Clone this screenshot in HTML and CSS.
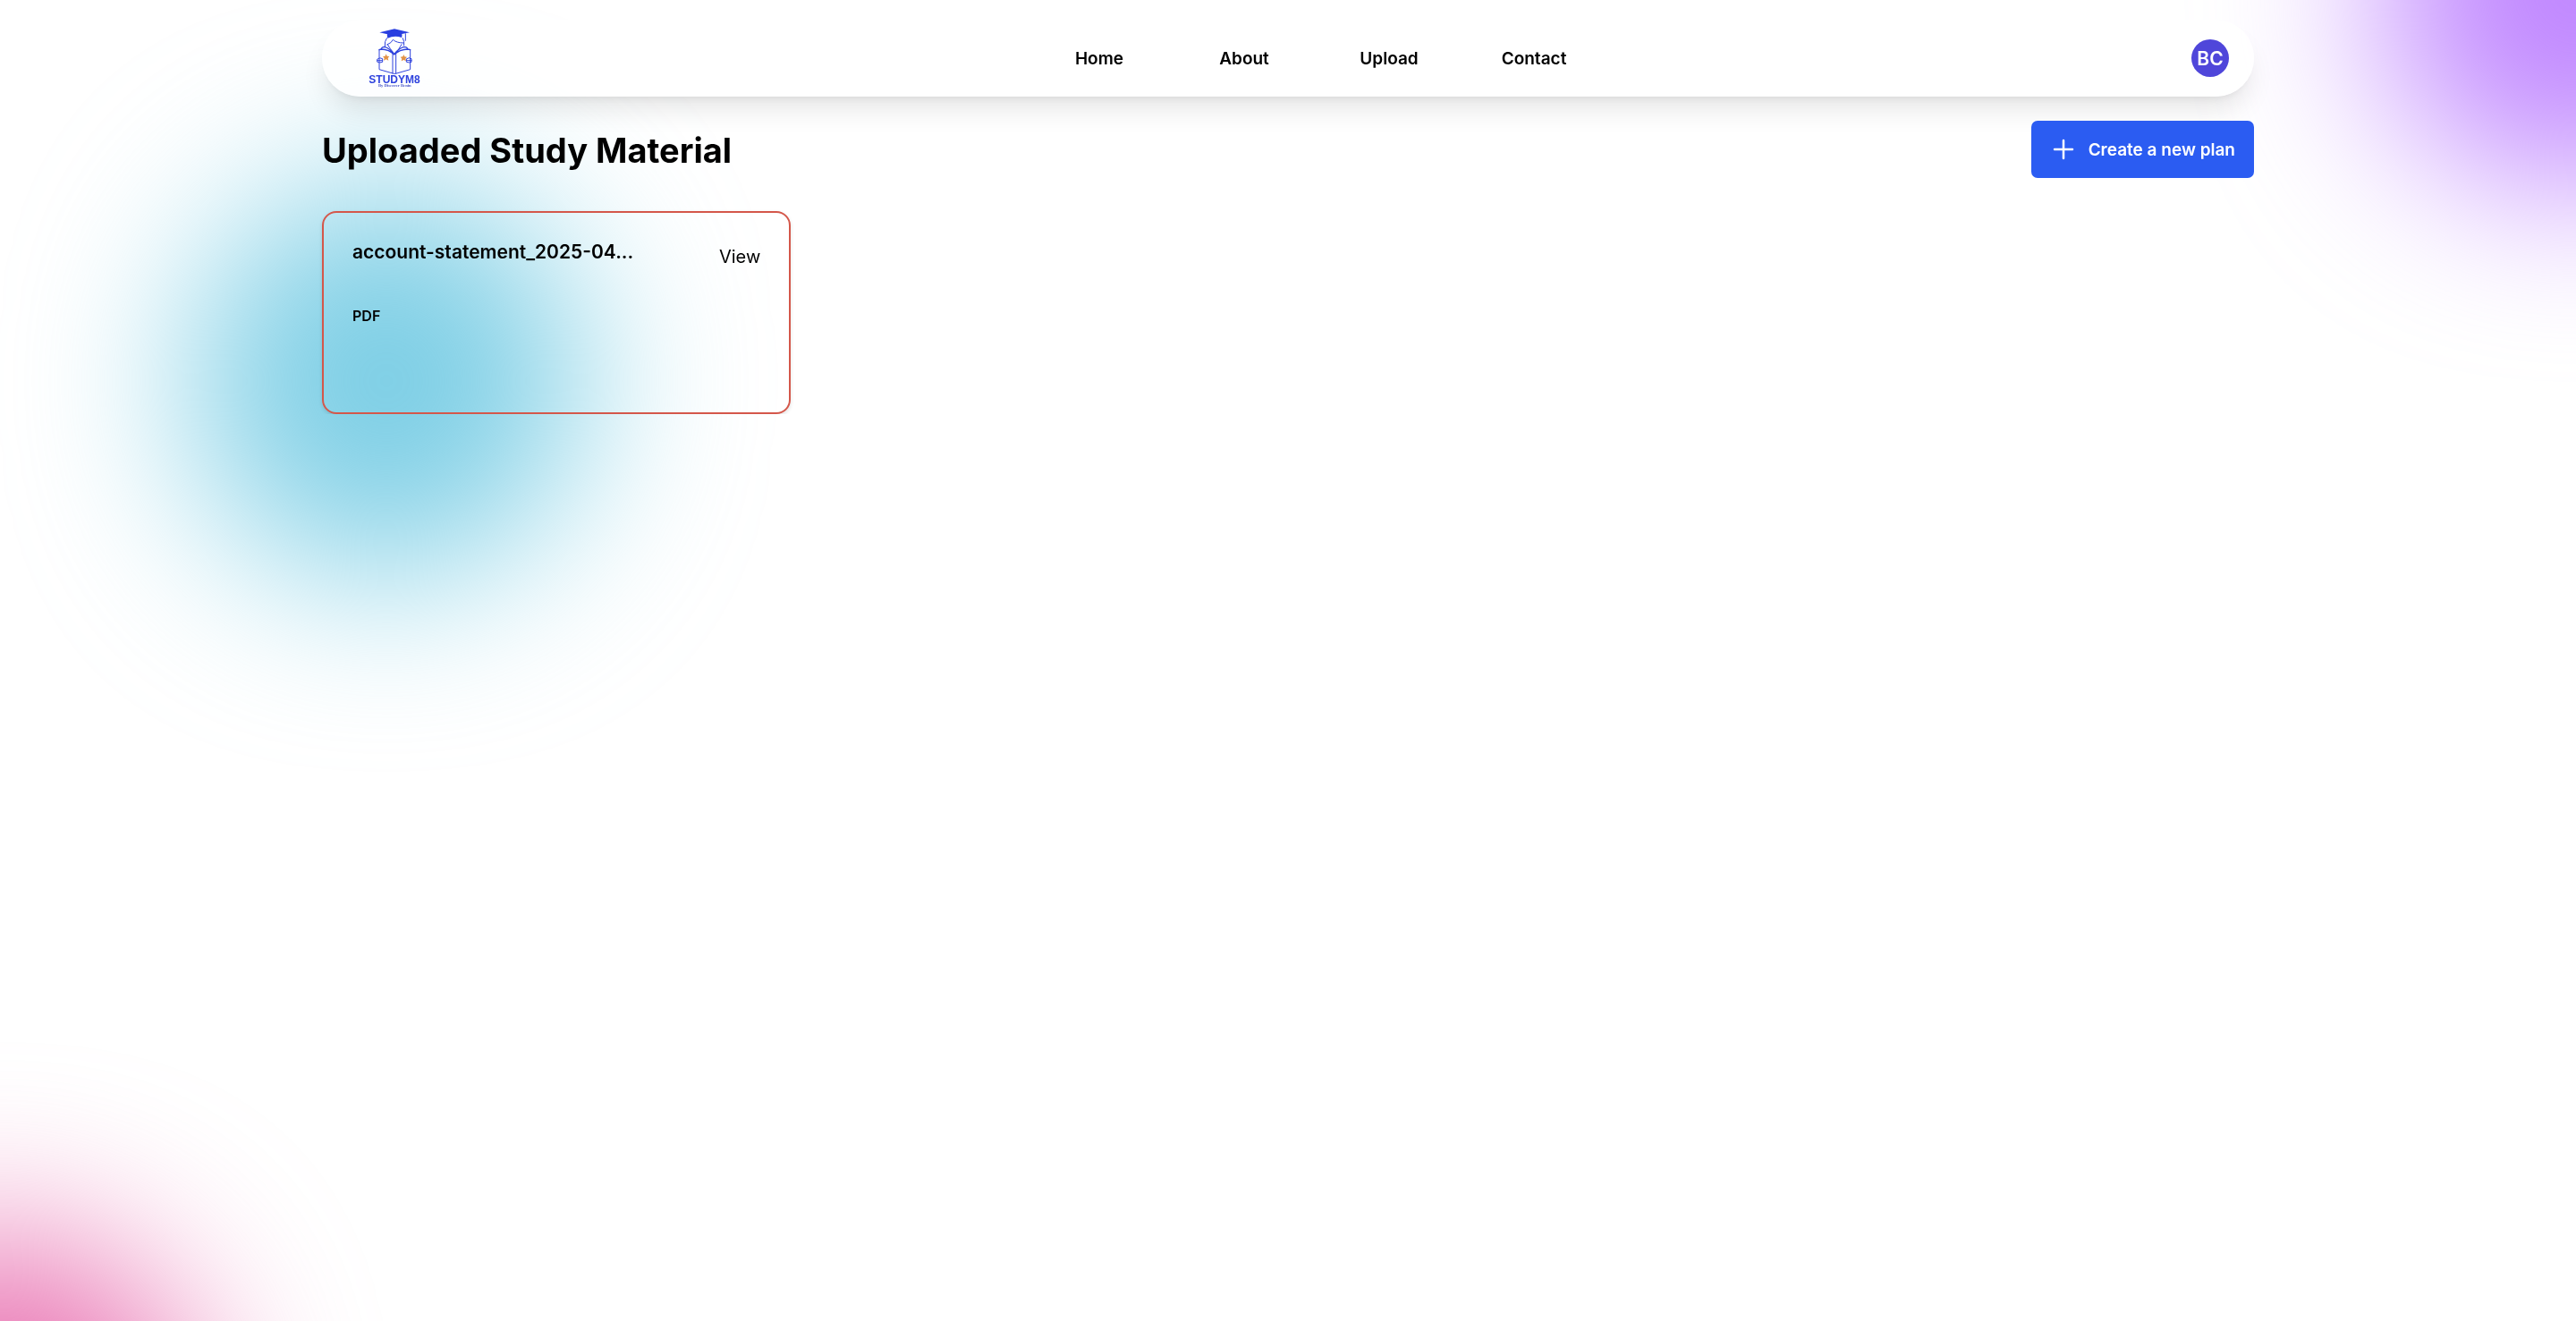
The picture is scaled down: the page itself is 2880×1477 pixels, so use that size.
FILE: index.html
```html
<!DOCTYPE html>
<html lang="en">
<head>
<meta charset="utf-8">
<meta name="viewport" content="width=device-width, initial-scale=1">
<title>StudyM8 – Uploaded Study Material</title>
<link rel="stylesheet" href="styles.css">
</head>
<body>
<div class="backdrop" aria-hidden="true">
  <div class="blob blob-cyan"></div>
  <div class="blob blob-purple"></div>
  <div class="blob blob-pink"></div>
</div>
<div class="page">
  <header class="navbar">
    <a href="#" class="logo" aria-label="StudyM8">
      <svg class="logo-art" viewBox="-36 6 318 258" fill="none" stroke="#2f43dd" stroke-width="4" stroke-linejoin="round" stroke-linecap="round">
        <path d="M73 49 L123 37 L174 49 L148 54 Q150 62 147 66 Q124 57 100 68 Q97 62 99 55 Z" fill="#2a3fe0" stroke="none"/>
        <path d="M160 53 V76" stroke-width="3"/>
        <path d="M97 68 Q89 78 91 96 M151 68 Q157 78 155 92 M98 90 Q114 84 118 73 Q130 84 153 84 M101 91 Q108 103 121 119 M147 89 Q138 108 124 119" stroke-width="3"/>
        <path d="M72 107 L78 105 Q81 97 90 97 Q111 104 122 123 Q134 104 155 97 Q165 97 168 105 L176 107 M78 105 Q106 106 122 123 Q140 106 168 105"/>
        <path d="M72 107 V173 L121 187 L127 187 L176 173 V107 M117 121 V186 M128 121 V186" stroke-width="3"/>
        <path d="M66 138 Q75 131 83 137 V148 Q74 152 66 148 Z M66 143 H82 M164 137 Q172 131 180 137 V148 Q173 152 164 148 Z M164 143 H180" stroke-width="3"/>
        <path id="star" d="M95 121 L98 128 L106 129 L101 135 L103 143 L95 139 L87 143 L89 135 L84 129 L92 128 Z" fill="#e29245" stroke="none"/>
        <use href="#star" x="59" y="2"/>
        <text class="logo-name" x="123" y="220" text-anchor="middle">STUDYM8</text>
        <text class="logo-tag" x="124" y="232" text-anchor="middle">By Discover Benin</text>
      </svg>
    </a>
    <nav class="menu">
      <a href="#">Home</a>
      <a href="#">About</a>
      <a href="#">Upload</a>
      <a href="#">Contact</a>
    </nav>
    <button type="button" class="avatar">BC</button>
  </header>
  <main>
    <div class="heading">
      <h1>Uploaded Study Material</h1>
      <button type="button" class="create">
        <svg class="plus" viewBox="0 0 24 24" fill="none" stroke="currentColor" stroke-width="2.500" stroke-linecap="round"><path d="M12 2 V22 M2 12 H22"/></svg>
        Create a new plan
      </button>
    </div>
    <section class="materials">
      <article class="card">
        <div class="card-top">
          <h2>account-statement_2025-04...</h2>
          <a href="#" class="view">View</a>
        </div>
        <p class="type">PDF</p>
      </article>
    </section>
  </main>
</div>
</body>
</html>
```
FILE: styles.css
```css
* {
  box-sizing: border-box;
  margin: 0;
}

body {
  background: #fff;
  color: #000;
  font-family: Inter, "Liberation Sans", sans-serif;
}

a {
  color: inherit;
  text-decoration: none;
}

button {
  border: 0;
  padding: 0;
  font: inherit;
  cursor: pointer;
}

/* Soft colour glows behind the page */
.backdrop {
  position: fixed;
  inset: 0;
  overflow: hidden;
  z-index: -1;
}

.blob {
  position: absolute;
  width: 436px;
  height: 436px;
  border-radius: 50%;
  filter: blur(96px);
}

.blob-cyan {
  top: 208px;
  left: 214px;
  background: rgb(124, 206, 229);
}

.blob-purple {
  top: -228px;
  right: -218px;
  background: rgb(191, 133, 255);
}

.blob-pink {
  bottom: -343px;
  left: -216px;
  background: rgb(232, 112, 176);
}

.page {
  width: 75%;
  margin: 0 auto;
  padding-top: 22px;
}

.navbar {
  display: flex;
  align-items: center;
  justify-content: space-between;
  padding: 0 28px;
  border-radius: 43px;
  background: rgba(255, 255, 255, 0.8);
  box-shadow: 0 20px 30px -6px rgba(0, 0, 0, 0.1), 0 8px 12px -8px rgba(0, 0, 0, 0.1);
}

.logo-art {
  display: block;
  width: 106px;
  height: 86px;
}

.logo-name {
  font: 700 36px "Liberation Sans", sans-serif;
  fill: #2f43dd;
  stroke: none;
}

.logo-tag {
  font: 700 14px "Liberation Serif", serif;
  fill: #4a57c8;
  stroke: none;
}

.menu {
  display: grid;
  grid-template-columns: repeat(4, 162px);
  padding-top: 2px;
  text-align: center;
  font-size: 19px;
  font-weight: 600;
  line-height: 28px;
}

.avatar {
  width: 42px;
  height: 42px;
  border-radius: 50%;
  background: #4f46da;
  color: #fff;
  font-size: 21px;
  font-weight: 600;
}

.heading {
  display: flex;
  align-items: center;
  justify-content: space-between;
  margin-top: 27px;
}

h1 {
  padding-top: 2px;
  font-size: 38px;
  font-weight: 700;
  line-height: 48px;
}

.create {
  display: flex;
  align-items: center;
  gap: 16px;
  height: 64px;
  padding: 0 21px 0 24px;
  border-radius: 7px;
  background: #2b5cf2;
  color: #fff;
  font-size: 19px;
  font-weight: 600;
}

.plus {
  width: 24px;
  height: 24px;
}

.materials {
  display: grid;
  grid-template-columns: repeat(4, 1fr);
  gap: 21px;
  margin-top: 37px;
}

.card {
  min-height: 227px;
  padding: 32px;
  border: 2px solid #d4574a;
  border-radius: 16px;
  box-shadow: 0 2px 4px rgba(0, 0, 0, 0.12);
}

.card-top {
  display: flex;
  justify-content: space-between;
}

h2 {
  font-size: 21px;
  font-weight: 600;
  line-height: 24px;
}

.view {
  padding-top: 4px;
  font-size: 20px;
  line-height: 26px;
}

.type {
  margin-top: 41px;
  font-size: 16px;
  font-weight: 600;
  line-height: 24px;
}
```
